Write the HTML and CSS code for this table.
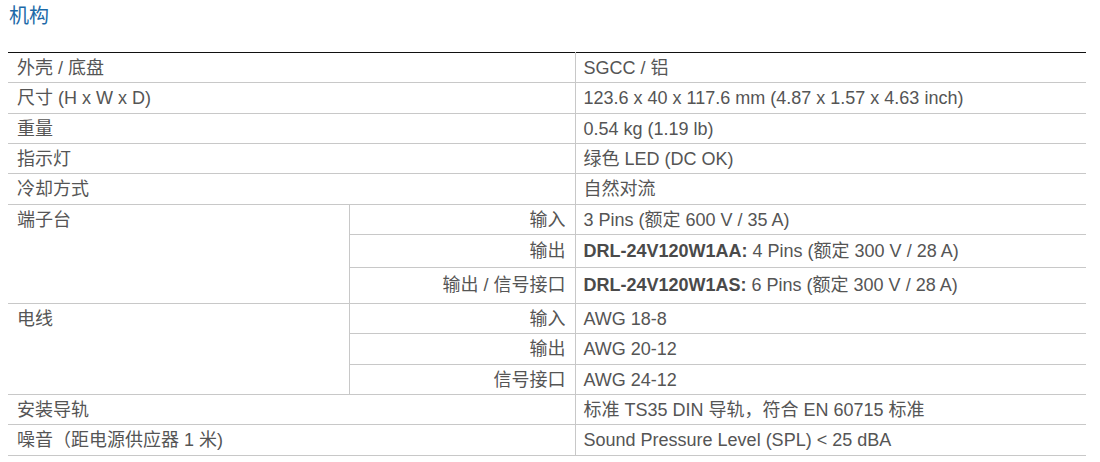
FILE: index.html
```html
<!DOCTYPE html>
<html lang="zh">
<head>
<meta charset="utf-8">
<title>机构</title>
<link rel="stylesheet" href="styles.css">
</head>
<body>
<div class="section-title">机构</div>
<table class="spec">
  <colgroup>
    <col class="c1"><col class="c2"><col class="c3">
  </colgroup>
  <tbody>
    <tr><td colspan="2">外壳 / 底盘</td><td class="val">SGCC / 铝</td></tr>
    <tr><td colspan="2">尺寸 (H x W x D)</td><td class="val">123.6 x 40 x 117.6 mm (4.87 x 1.57 x 4.63 inch)</td></tr>
    <tr><td colspan="2">重量</td><td class="val">0.54 kg (1.19 lb)</td></tr>
    <tr><td colspan="2">指示灯</td><td class="val">绿色 LED (DC OK)</td></tr>
    <tr><td colspan="2">冷却方式</td><td class="val">自然对流</td></tr>
    <tr><td rowspan="3" class="group">端子台</td><td class="sub">输入</td><td class="val">3 Pins (额定 600 V / 35 A)</td></tr>
    <tr class="tall1"><td class="sub">输出</td><td class="val"><b>DRL-24V120W1AA:</b> 4 Pins (额定 300 V / 28 A)</td></tr>
    <tr class="tall2"><td class="sub">输出 / 信号接口</td><td class="val"><b>DRL-24V120W1AS:</b> 6 Pins (额定 300 V / 28 A)</td></tr>
    <tr><td rowspan="3" class="group">电线</td><td class="sub">输入</td><td class="val">AWG 18-8</td></tr>
    <tr><td class="sub">输出</td><td class="val">AWG 20-12</td></tr>
    <tr><td class="sub">信号接口</td><td class="val">AWG 24-12</td></tr>
    <tr><td colspan="2">安装导轨</td><td class="val">标准 TS35 DIN 导轨，符合 EN 60715 标准</td></tr>
    <tr><td colspan="2">噪音（距电源供应器 1 米)</td><td class="val">Sound Pressure Level (SPL) &lt; 25 dBA</td></tr>
  </tbody>
</table>
</body>
</html>
```

FILE: styles.css
```css
html, body {
  background: #fff;
}
body {
  margin: 4px 8px 8px 8px;
  font-family: "Liberation Sans", "Noto Sans CJK SC", sans-serif;
  color: #555;
}
.section-title {
  font-size: 20px;
  line-height: 24px;
  color: #1d6aa8;
  padding-left: 1px;
  margin-bottom: 24px;
}
.spec {
  width: 1078px;
  border-collapse: collapse;
  table-layout: fixed;
  border-top: 1px solid #111;
  font-size: 18px;
}
.c1 { width: 341px; }
.c2 { width: 226px; }
.c3 { width: 511px; }
.spec td {
  border-bottom: 1px solid #c8c8c8;
  padding: 5px 9px 3px;
  height: 21.33px;
  line-height: 21.33px;
  vertical-align: middle;
  white-space: nowrap;
}
.spec td.val {
  border-left: 1px solid #c8c8c8;
  padding-left: 8px;
}
.spec td.sub {
  border-left: 1px solid #c8c8c8;
  text-align: right;
}
.spec td.group {
  vertical-align: top;
}
.spec b {
  font-weight: bold;
  color: #4a4a4a;
}
.tall1 td.sub, .tall1 td.val {
  height: 31px;
  padding-top: 1px;
  padding-bottom: 0;
}
.tall2 td.sub, .tall2 td.val {
  height: 34px;
  padding-top: 1px;
  padding-bottom: 0;
}
```
